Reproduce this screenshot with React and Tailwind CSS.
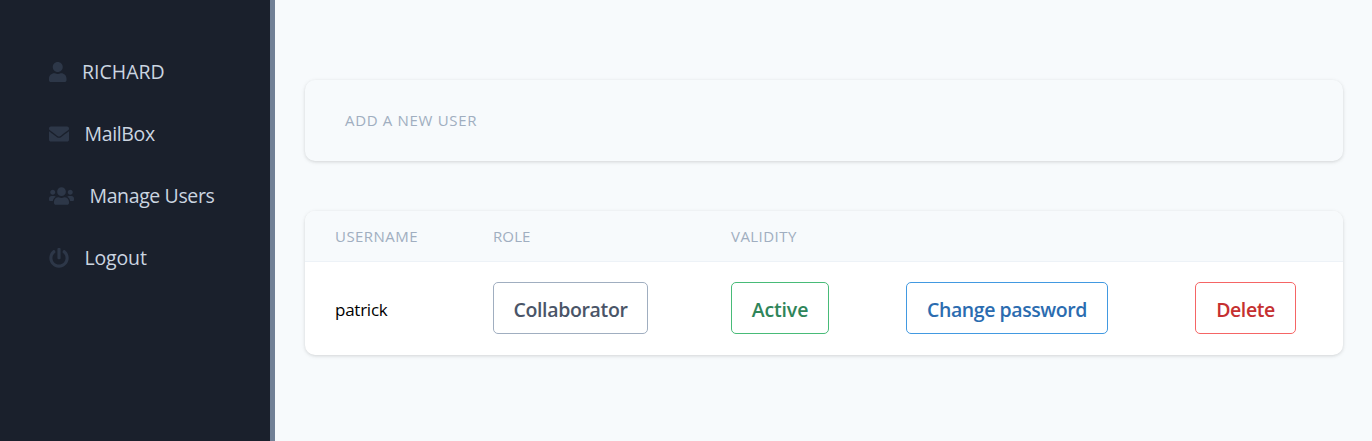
import { FaUser, FaEnvelope, FaUsers, FaPowerOff } from "react-icons/fa";

const links = [
  { icon: FaUser, label: "RICHARD", size: "w-[17.5px]", track: "tracking-[0px]" },
  { icon: FaEnvelope, label: "MailBox", size: "w-5", track: "tracking-[-0.35px]" },
  { icon: FaUsers, label: "Manage Users", size: "w-[25px]", track: "tracking-[-0.38px]" },
  { icon: FaPowerOff, label: "Logout", size: "w-5", track: "tracking-[-0.15px]" },
];

function Button({ className, children }) {
  return (
    <button className={`flex h-[52px] items-center justify-center whitespace-nowrap rounded-[5px] border bg-white pt-[3px] text-[19.5px] font-semibold ${className}`}>
      {children}
    </button>
  );
}

export default function App() {
  return (
    <div className="flex h-[441px] w-full overflow-hidden bg-[#f7fafc] font-['Open_Sans','Noto_Sans',sans-serif]">
      <nav className="flex w-[275px] shrink-0 flex-col gap-8 border-r-5 border-[#718096] bg-[#1a202c] pl-[49.3px] pt-[57px]">
        {links.map(({ icon: Icon, label, size, track }) => (
          <a key={label} className="flex h-[30px] items-center gap-[15.2px] text-[19.5px] text-[#cbd5e0]">
            <Icon className={`h-5 shrink-0 text-[#2d3748] ${size}`} />
            <span className={`whitespace-nowrap ${track}`}>{label}</span>
          </a>
        ))}
      </nav>
      <main className="flex min-w-0 flex-1 flex-col gap-[50px] pl-[30px] pr-[29px] pt-20">
        <section className="flex h-[81px] shrink-0 items-center rounded-[10px] pl-10 text-[15px] text-[#a0aec0] shadow-[0_1px_4px_rgba(0,0,0,0.1),0_1px_3px_rgba(0,0,0,0.06)]">
          <span className="tracking-[0.68px]">ADD A NEW USER</span>
        </section>
        <section className="h-[144px] shrink-0 overflow-hidden rounded-[10px] bg-white shadow-[0_1px_4px_rgba(0,0,0,0.1),0_1px_3px_rgba(0,0,0,0.06)]">
          <div className="grid h-[51px] grid-cols-[158px_238px_175px_289px_1fr] items-center border-b border-[#edf2f7] bg-[#f7fafc] pl-[30px] text-[15px] text-[#a0aec0]">
            <span className="tracking-[0.45px]">USERNAME</span>
            <span className="tracking-[0.1px]">ROLE</span>
            <span className="tracking-[0.45px]">VALIDITY</span>
          </div>
          <div className="grid h-[93px] grid-cols-[158px_238px_175px_289px_1fr] items-center pb-px pl-[30px] text-[17px] text-black">
            <span className="pt-1 tracking-[-0.25px]">patrick</span>
            <Button className="w-[155px] border-[#a0aec0] tracking-[-0.35px] text-[#4a5568]">Collaborator</Button>
            <Button className="w-[98px] border-[#48bb78] tracking-[-0.15px] text-[#2f855a]">Active</Button>
            <Button className="w-[202px] border-[#4299e1] tracking-[-0.43px] text-[#2b6cb0]">Change password</Button>
            <Button className="w-[101px] border-[#f56565] tracking-[-0.4px] text-[#c53030]">Delete</Button>
          </div>
        </section>
      </main>
    </div>
  );
}
